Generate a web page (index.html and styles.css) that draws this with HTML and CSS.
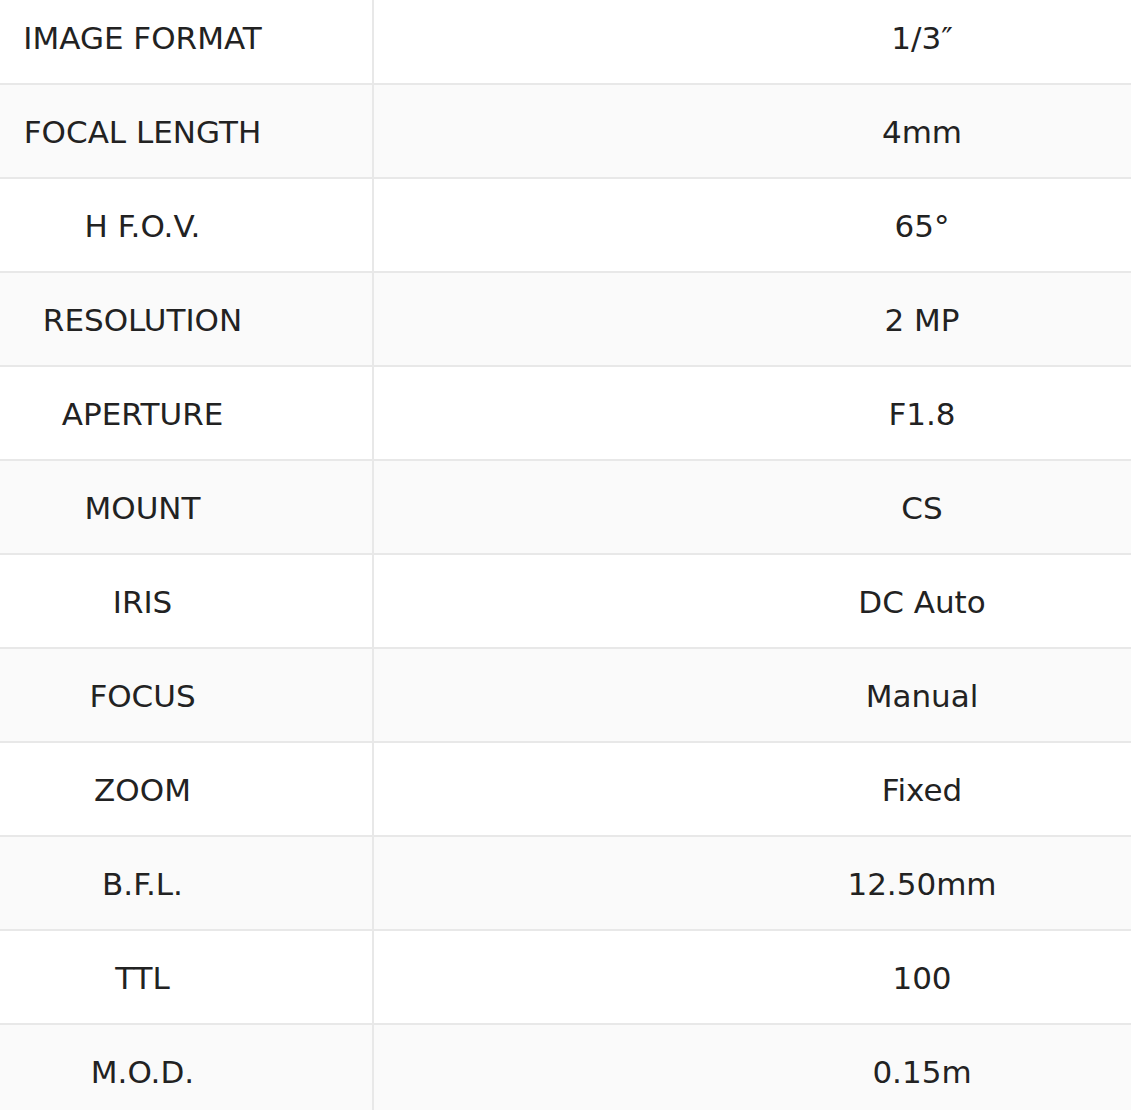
FILE: index.html
```html
<!DOCTYPE html>
<html>
<head>
<meta charset="utf-8">
<link rel="stylesheet" href="styles.css">
</head>
<body>
<div class="viewport">
  <div class="spec-table">
    <div class="row"><div class="label">IMAGE FORMAT</div><div class="value">1/3″</div></div>
    <div class="row"><div class="label">FOCAL LENGTH</div><div class="value">4mm</div></div>
    <div class="row"><div class="label">H F.O.V.</div><div class="value">65°</div></div>
    <div class="row"><div class="label">RESOLUTION</div><div class="value">2 MP</div></div>
    <div class="row"><div class="label">APERTURE</div><div class="value">F1.8</div></div>
    <div class="row"><div class="label">MOUNT</div><div class="value">CS</div></div>
    <div class="row"><div class="label">IRIS</div><div class="value">DC Auto</div></div>
    <div class="row"><div class="label">FOCUS</div><div class="value">Manual</div></div>
    <div class="row"><div class="label">ZOOM</div><div class="value">Fixed</div></div>
    <div class="row"><div class="label">B.F.L.</div><div class="value">12.50mm</div></div>
    <div class="row"><div class="label">TTL</div><div class="value">100</div></div>
    <div class="row"><div class="label">M.O.D.</div><div class="value">0.15m</div></div>
  </div>
</div>
</body>
</html>
```
FILE: styles.css
```css
html, body {
  margin: 0;
  padding: 0;
  background: #ffffff;
}
.viewport {
  width: 1131px;
  height: 1110px;
  overflow: hidden;
}
.spec-table {
  margin: -9px 0 0 -87px;
  width: 1557px;
  font-family: "DejaVu Sans", Verdana, sans-serif;
  font-size: 31px;
  color: #222222;
}
.row {
  display: grid;
  grid-template-columns: 461px 1096px;
  height: 92px;
  border-bottom: 2px solid #e8e8e8;
  background: #ffffff;
}
.row:nth-child(even) {
  background: #fafafa;
}
.label, .value {
  display: flex;
  align-items: center;
  justify-content: center;
  white-space: nowrap;
  padding-top: 2px;
}
.label {
  border-right: 2px solid #e8e8e8;
}
```
